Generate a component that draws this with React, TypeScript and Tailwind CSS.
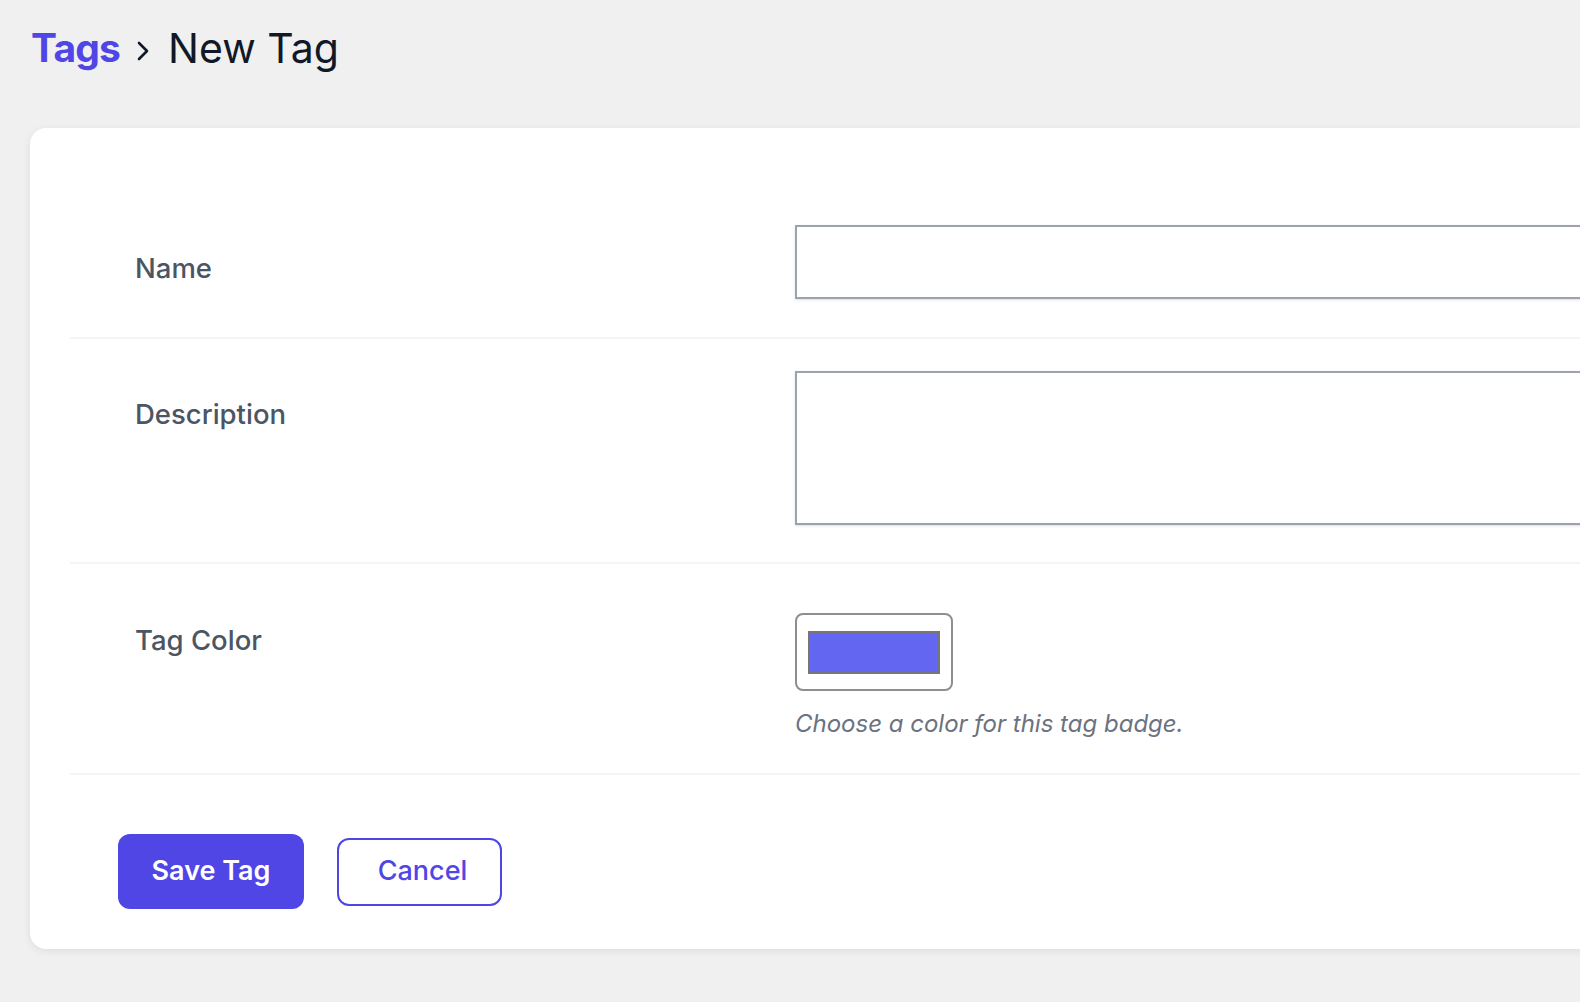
import React from "react";

const font = { fontFamily: "Inter, 'Noto Sans', sans-serif" };

function Row({
  label,
  labelPad,
  className,
  children,
}: {
  label: string;
  labelPad: string;
  className: string;
  children: React.ReactNode;
}) {
  return (
    <div className={`flex border-b-2 border-[#f3f4f6] ${className}`}>
      <div className={`w-[725px] shrink-0 pl-[65px] ${labelPad}`}>
        <label className="block text-[27.5px] leading-[40px] font-medium text-[#4b5563]">{label}</label>
      </div>
      <div className="flex-1">{children}</div>
    </div>
  );
}

export default function App() {
  return (
    <div className="h-[1002px] w-[1580px] overflow-hidden bg-[#f0f0f0]" style={font}>
      {/* Breadcrumb */}
      <div className="flex items-start pl-[31px] pt-[22px] h-[128px]">
        <a className="text-[39px] leading-[52px] font-bold text-[#4f46e5] tracking-[-0.8px]">Tags</a>
        <svg
          className="ml-[16px] mr-[16px] mt-[2px]"
          width="16"
          height="52"
          viewBox="0 0 16 52"
          fill="none"
          stroke="#111827"
          strokeWidth="2.6"
          strokeLinecap="round"
          strokeLinejoin="round"
        >
          <path d="M3 19l8 8-8 8" />
        </svg>
        <h1 className="text-[41px] leading-[52px] font-normal text-[#111827]">New Tag</h1>
      </div>

      {/* Card */}
      <div className="ml-[30px] w-[1700px] rounded-[16px] bg-white pl-[40px] shadow-[0_2px_8px_rgba(0,0,0,0.08)]">
        <Row label="Name" labelPad="pt-[23px]" className="pt-[97px] pb-[38px]">
          <input className="block h-[74px] w-full border-2 border-[#9ca3af] bg-white shadow-sm outline-none" />
        </Row>

        <Row label="Description" labelPad="pt-[23px]" className="pt-[32px] pb-[37px]">
          <textarea className="block h-[154px] w-full resize-none border-2 border-[#9ca3af] bg-white shadow-sm outline-none" />
        </Row>

        <Row label="Tag Color" labelPad="pt-[7px]" className="pt-[49px] pb-[33px]">
          <div className="flex h-[78px] w-[158px] items-center justify-center rounded-[8px] border-2 border-[#8b8e93] bg-white">
            <div className="h-[43px] w-[132px] border-2 border-[#767676] bg-[#6366f1]" />
          </div>
          <p className="mt-[17px] text-[24px] leading-[32px] italic text-[#6b7280]">
            Choose a color for this tag badge.
          </p>
        </Row>

        <div className="flex items-center gap-[33px] pl-[48px] pt-[59px] pb-[40px]">
          <button className="h-[75px] w-[186px] rounded-[12px] bg-[#4f46e5] text-[27px] font-semibold text-white">
            Save Tag
          </button>
          <button className="h-[68px] w-[165px] rounded-[12px] border-2 border-[#4f46e5] bg-white pl-[6px] text-[27px] font-medium text-[#4f46e5]">
            Cancel
          </button>
        </div>
      </div>
    </div>
  );
}
